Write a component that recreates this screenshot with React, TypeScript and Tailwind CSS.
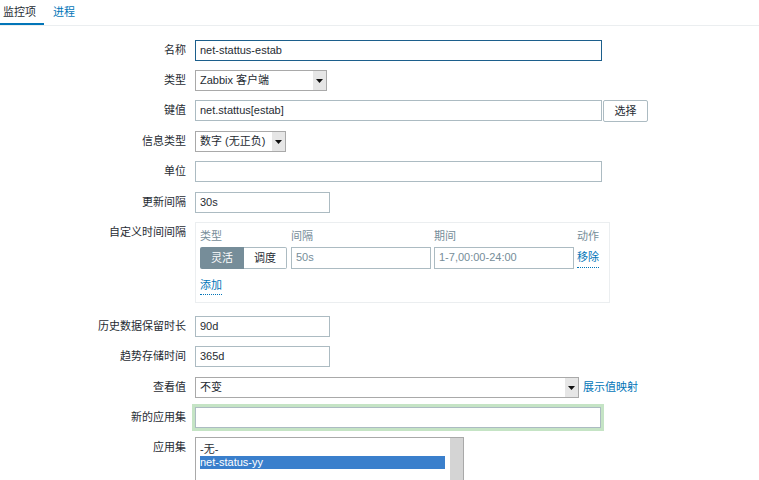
import React from 'react';

const Arrow: React.FC = () => (
  <span className="flex h-full w-[13px] items-center justify-center bg-[#e6e6e6]">
    <svg width="7" height="4" viewBox="0 0 7 4">
      <path d="M0 0h7L3.5 4z" fill="#111" />
    </svg>
  </span>
);

const Select: React.FC<{ value: string; w: string }> = ({ value, w }) => (
  <div className={`flex h-[21px] ${w} items-center border border-[#a9a9a9] bg-white`}>
    <span className="flex-1 pl-[4px] leading-[19px] text-[#1f2c33]">{value}</span>
    <Arrow />
  </div>
);

const Input: React.FC<{ value?: string; w: string; cls?: string; muted?: boolean }> = ({ value = '', w, cls = 'border-[#acbbc2]', muted }) => (
  <div className={`h-[21px] ${w} border ${cls} bg-white pl-[4px] leading-[19px] ${muted ? 'text-[#768d99]' : 'text-[#1f2c33]'}`}>
    {value}
  </div>
);

const Row: React.FC<{ label: string; h: string; children: React.ReactNode }> = ({ label, h, children }) => (
  <div className={`flex items-start ${h}`}>
    <div className="w-[186px] shrink-0 text-right leading-[21px] text-[#1f2c33]">{label}</div>
    <div className="ml-[9px] flex items-start">{children}</div>
  </div>
);

export default function App() {
  return (
    <div className="h-[480px] w-[759px] overflow-hidden bg-white text-[11px] font-['Liberation_Sans','Noto_Sans_CJK_SC',sans-serif]">
      {/* Tabs */}
      <div className="flex h-[26px] border-b border-[#ebeef0]">
        <div className="w-[44px] border-b-[2px] border-[#0275b8] pl-[3px] leading-[25px] text-[#1f2c33]">监控项</div>
        <div className="ml-[9px] leading-[25px] text-[#0275b8]">进程</div>
      </div>

      <div className="pt-[14px]">
        <Row label="名称" h="h-[30px]">
          <Input value="net-stattus-estab" w="w-[407px]" cls="border-[#1c5f8c]" />
        </Row>
        <Row label="类型" h="h-[30px]">
          <Select value="Zabbix 客户端" w="w-[132px]" />
        </Row>
        <Row label="键值" h="h-[31px]">
          <Input value="net.stattus[estab]" w="w-[407px]" />
          <div className="ml-[1px] h-[22px] w-[45px] rounded-[2px] border border-[#acbbc2] text-center leading-[20px] text-[#1f2c33]">选择</div>
        </Row>
        <Row label="信息类型" h="h-[30px]">
          <Select value="数字 (无正负)" w="w-[91px]" />
        </Row>
        <Row label="单位" h="h-[31px]">
          <Input w="w-[407px]" />
        </Row>
        <Row label="更新间隔" h="h-[30px]">
          <Input value="30s" w="w-[135px]" />
        </Row>
        <Row label="自定义时间间隔" h="h-[94px]">
          <div className="h-[81px] w-[415px] border border-[#ebeef0] pl-[4px] pt-[5px]">
            <div className="flex h-[19px] leading-[16px] text-[#768d99]">
              <span className="w-[91px]">类型</span>
              <span className="w-[143px]">间隔</span>
              <span className="w-[143px]">期间</span>
              <span>动作</span>
            </div>
            <div className="flex h-[22px] items-start">
              <div className="flex h-[22px] w-[87px]">
                <span className="w-[44px] rounded-l-[2px] bg-[#768d99] text-center leading-[22px] text-white">灵活</span>
                <span className="flex-1 rounded-r-[2px] border border-l-0 border-[#acbbc2] text-center leading-[20px] text-[#1f2c33]">调度</span>
              </div>
              <div className="ml-[4px]">
                <Input value="50s" w="w-[140px] h-[22px]" muted />
              </div>
              <div className="ml-[3px]">
                <Input value="1-7,00:00-24:00" w="w-[140px] h-[22px]" muted />
              </div>
              <span className="ml-[3px] border-b border-dotted border-[#0275b8] leading-[20px] text-[#0275b8]">移除</span>
            </div>
            <div className="mt-[8px] flex">
              <span className="border-b border-dotted border-[#0275b8] leading-[17px] text-[#0275b8]">添加</span>
            </div>
          </div>
        </Row>
        <Row label="历史数据保留时长" h="h-[30px]">
          <Input value="90d" w="w-[135px]" />
        </Row>
        <Row label="趋势存储时间" h="h-[31px]">
          <Input value="365d" w="w-[135px]" />
        </Row>
        <Row label="查看值" h="h-[30px]">
          <Select value="不变" w="w-[384px]" />
          <span className="ml-[4px] leading-[21px] text-[#0275b8]">展示值映射</span>
        </Row>
        <Row label="新的应用集" h="h-[30px]">
          <Input w="w-[406px]" cls="border-[#acbbc2] shadow-[0_0_0_3px_#c5e4c5]" />
        </Row>
        <Row label="应用集" h="h-[60px]">
          <div className="flex h-[60px] w-[269px] border border-[#a9a9a9] bg-white">
            <div className="flex-1 pl-[4px] pt-[5px] leading-[13px]">
              <div className="text-[#1f2c33]">-无-</div>
              <div className="w-[245px] bg-[#3a7fcc] text-white">net-status-yy</div>
            </div>
            <div className="w-[13px] bg-[#d4d4d4]" />
          </div>
        </Row>
      </div>
    </div>
  );
}
